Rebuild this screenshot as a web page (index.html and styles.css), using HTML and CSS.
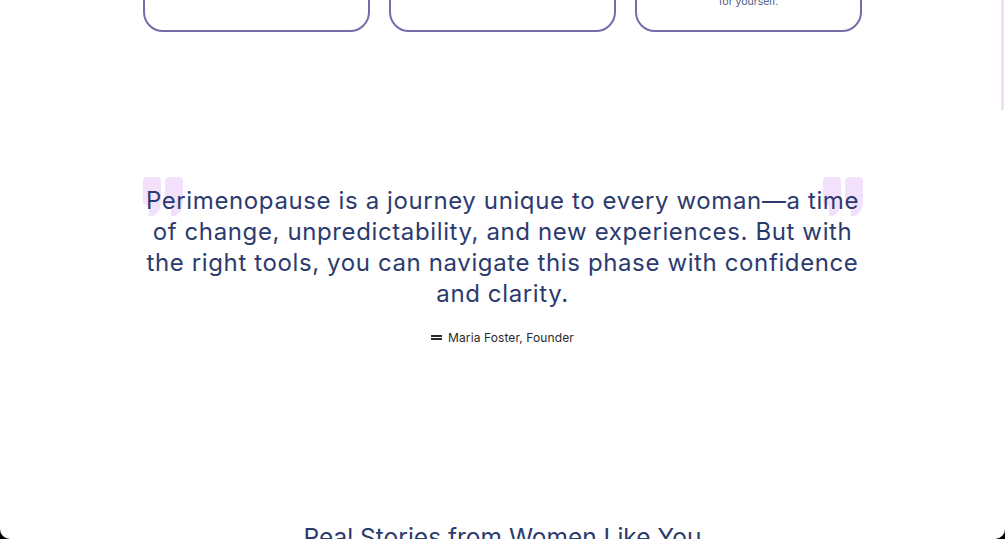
FILE: index.html
```html
<!DOCTYPE html>
<html lang="en">
<head>
<meta charset="utf-8">
<title>Perimenopause</title>
<link rel="stylesheet" href="styles.css">
</head>
<body>
<div class="page">
  <div class="scroll-thumb"></div>
  <section class="features">
    <div class="card"></div>
    <div class="card"></div>
    <div class="card"><p class="card-text">for yourself.</p></div>
  </section>

  <section class="quote-section">
    <div class="quote-wrap">
      <svg class="qmark qmark-left" width="40" height="40" viewBox="0 0 40 40" aria-hidden="true">
        <path d="M4 0h10a4 4 0 0 1 4 4v20c0 6-2 12-8 15H6V28H4a4 4 0 0 1-4-4V4a4 4 0 0 1 4-4z" fill="#f3e1fb"/>
        <path d="M26 0h10a4 4 0 0 1 4 4v20c0 6-2 12-8 15h-4V28h-2a4 4 0 0 1-4-4V4a4 4 0 0 1 4-4z" fill="#f3e1fb"/>
      </svg>
      <svg class="qmark qmark-right" width="40" height="40" viewBox="0 0 40 40" aria-hidden="true">
        <path d="M4 0h10a4 4 0 0 1 4 4v20c0 6-2 12-8 15H6V28H4a4 4 0 0 1-4-4V4a4 4 0 0 1 4-4z" fill="#f3e1fb"/>
        <path d="M26 0h10a4 4 0 0 1 4 4v20c0 6-2 12-8 15h-4V28h-2a4 4 0 0 1-4-4V4a4 4 0 0 1 4-4z" fill="#f3e1fb"/>
      </svg>
      <blockquote class="quote">Perimenopause is a journey unique to every woman—a time of change, unpredictability, and new experiences. But with the right tools, you can navigate this phase with confidence and clarity.</blockquote>
      <p class="author"><span class="dash"></span>Maria Foster, Founder</p>
    </div>
  </section>

  <section class="stories">
    <h2 class="stories-title">Real Stories from Women Like You</h2>
  </section>
</div>
</body>
</html>
```

FILE: styles.css
```css
* { box-sizing: border-box; }
html, body {
  margin: 0;
  padding: 0;
  background: #000;
}
body {
  font-family: "Inter", "Open Sans", sans-serif;
  color: #2c3b6e;
}
.page {
  position: relative;
  width: 1005px;
  height: 539px;
  background: #fff;
  overflow: hidden;
  border-radius: 0 0 10px 10px;
}
.scroll-thumb {
  position: absolute;
  right: 1px;
  top: 0;
  width: 3px;
  height: 110px;
  background: #f4dcfa;
}
.features {
  display: flex;
  justify-content: center;
  gap: 19px;
  margin-top: -70px;
}
.card {
  width: 227px;
  height: 102px;
  border: 2px solid #7b6aa9;
  border-radius: 20px;
  display: flex;
  align-items: flex-end;
  justify-content: center;
}
.card-text {
  margin: 0 0 22px;
  font-size: 10.5px;
  color: #4b5a86;
}
.quote-section {
  display: flex;
  justify-content: center;
  padding-top: 153px;
}
.quote-wrap {
  position: relative;
  width: 718px;
  text-align: center;
}
.qmark {
  position: absolute;
  top: -8px;
}
.qmark-left { left: -1px; }
.qmark-right { right: -1px; }
.quote {
  position: relative;
  margin: 0;
  font-size: 24px;
  line-height: 31px;
  font-weight: 400;
  letter-spacing: 0.62px;
  color: #2c3b6e;
}
.author {
  margin: 21px 0 0;
  display: flex;
  align-items: center;
  justify-content: center;
  gap: 6px;
  font-size: 12px;
  letter-spacing: 0.1px;
  color: #2a2a2a;
}
.dash {
  display: inline-block;
  width: 11px;
  height: 5px;
  border-top: 2px solid #2a2a2a;
  border-bottom: 2px solid #2a2a2a;
}
.stories {
  padding-top: 177px;
  text-align: center;
}
.stories-title {
  margin: 0;
  font-size: 24.5px;
  font-weight: 400;
  color: #2c3b6e;
}
```
